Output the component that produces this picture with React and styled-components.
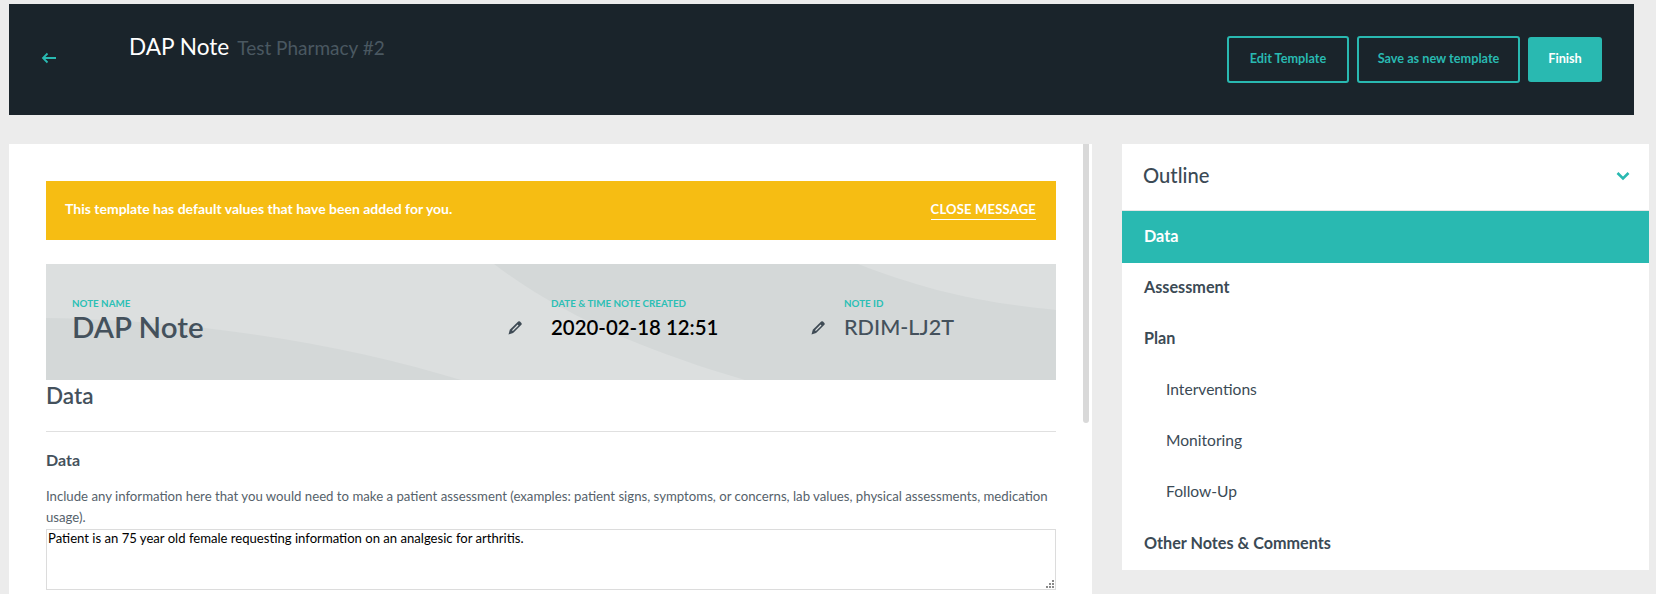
import React from 'react'
import styled, { createGlobalStyle } from 'styled-components'

const teal = '#29b9b1'
const slate = '#44515c'

const Global = createGlobalStyle`
  html, body {
    margin: 0;
    height: 100%;
    overflow: hidden;
    background: #ececec;
    font-family: Lato, "Open Sans", sans-serif;
  }
  * { box-sizing: border-box; }
`

const Page = styled.div`
  height: 594px;
  padding: 4px 7px 0 9px;
  overflow: hidden;
`

const Header = styled.header`
  width: 1625px;
  height: 111px;
  background: #1a242b;
  display: flex;
  padding: 0 32px 0 32px;
`

const BackLink = styled.a`
  width: 88px;
  color: ${teal};
  display: flex;
  align-items: center;
  padding-bottom: 3px;
`

const TitleWrap = styled.div`
  flex: 1;
  display: flex;
  align-items: baseline;
  gap: 8px;
  padding-top: 27px;
`

const Title = styled.h1`
  margin: 0;
  color: #fff;
  font-size: 22.6px;
  font-weight: 400;
  line-height: 32px;
`

const Subtitle = styled.span`
  color: #4a5861;
  font-size: 19px;
`

const Actions = styled.div`
  display: flex;
  align-items: center;
  gap: 8px;
`

const ActionButton = styled.button`
  height: ${props => props.$solid ? '45px' : '47px'};
  width: ${props => props.$w}px;
  border: ${props => props.$solid ? 'none' : `2px solid ${teal}`};
  border-radius: 3px;
  background: ${props => props.$solid ? teal : 'transparent'};
  color: ${props => props.$solid ? '#fff' : teal};
  font: 700 12.7px Lato, sans-serif;
  padding: 0 0 4px;
`

const Columns = styled.div`
  display: flex;
  gap: 30px;
  margin-top: 29px;
  align-items: flex-start;
`

const MainCard = styled.main`
  position: relative;
  width: 1083px;
  height: 450px;
  background: #fff;
  padding: 37px 36px 0 37px;
  overflow: hidden;
`

const ScrollThumb = styled.div`
  position: absolute;
  top: 0;
  right: 3px;
  width: 6px;
  height: 279px;
  border-radius: 0 0 3px 3px;
  background: #d9d9d9;
`

const Banner = styled.div`
  height: 59px;
  background: #f6bd13;
  color: #fff;
  display: flex;
  align-items: center;
  justify-content: space-between;
  padding: 0 20px 4px 19px;
  font-size: 14px;
  font-weight: 700;
`

const CloseLink = styled.a`
  margin-top: 4px;
  font-size: 13px;
  letter-spacing: 0.2px;
  padding-bottom: 2px;
  border-bottom: 1px solid #fff;
`

const NoteCard = styled.section`
  position: relative;
  margin-top: 24px;
  height: 116px;
  background: #dcdfdf;
  display: grid;
  grid-template-columns: 479px 293px 1fr;
  padding: 33px 0 0 26px;
  overflow: hidden;
`

const Swoosh = styled.svg`
  position: absolute;
  inset: 0;
  width: 100%;
  height: 100%;
`

const NoteField = styled.div`
  position: relative;
  display: flex;
  flex-direction: column;
`

const FieldLabel = styled.span`
  color: #2bbfb5;
  font-size: 9.8px;
  font-weight: 700;
  line-height: 12px;
`

const FieldValue = styled.span`
  color: ${props => props.$dark ? '#000' : slate};
  font-size: ${props => props.$size}px;
  font-weight: ${props => props.$weight};
  line-height: 34px;
  margin-top: 1px;
`

const EditIcon = styled.svg`
  position: absolute;
  right: ${props => props.$right}px;
  top: 23px;
  width: 16px;
  height: 16px;
  color: #3f4b55;
`

const SectionTitle = styled.h2`
  margin: 1px 0 0;
  color: ${slate};
  font-size: 22.5px;
  font-weight: 600;
  line-height: 30px;
`

const Rule = styled.hr`
  margin: 20px 0 0;
  border: none;
  border-top: 1px solid #e0e0e0;
`

const FieldTitle = styled.h3`
  margin: 17px 0 0;
  color: ${slate};
  font-size: 16px;
  font-weight: 700;
  line-height: 22px;
`

const HelpText = styled.p`
  margin: 15px 0 0;
  color: #56626b;
  font-size: 13.2px;
  line-height: 21px;
`

const InputWrap = styled.div`
  position: relative;
  margin-top: 1px;
`

const NoteInput = styled.textarea`
  display: block;
  width: 100%;
  height: 61px;
  padding: 1px 1px;
  border: 1px solid #dcdcdc;
  outline: none;
  resize: none;
  color: #000;
  font: 400 13.1px/15px Lato, sans-serif;
`

const Grip = styled.svg`
  position: absolute;
  right: 2px;
  bottom: 2px;
  width: 8px;
  height: 8px;
  color: #8a8a8a;
`

const Outline = styled.aside`
  width: 527px;
  height: 426px;
  background: #fff;
`

const OutlineHead = styled.div`
  height: 67px;
  display: flex;
  align-items: center;
  justify-content: space-between;
  padding: 0 19px 4px 21px;
  border-bottom: 1px solid #e6e6e6;
  color: #3b4a55;
  font-size: 20.2px;
  font-weight: 500;
  svg { color: ${teal}; margin-top: 2px; }
`

const OutlineItem = styled.a`
  display: flex;
  align-items: center;
  height: ${props => props.$active ? '52px' : '51.2px'};
  padding: 0 0 4px ${props => props.$sub ? '44px' : '22px'};
  background: ${props => props.$active ? teal : 'transparent'};
  color: ${props => props.$active ? '#fff' : '#3b4a55'};
  font-size: ${props => props.$sub ? '15.6px' : '16.2px'};
  font-weight: ${props => props.$sub ? 400 : 700};
`

const outline = [
  { label: 'Data', active: true },
  { label: 'Assessment' },
  { label: 'Plan' },
  { label: 'Interventions', sub: true },
  { label: 'Monitoring', sub: true },
  { label: 'Follow-Up', sub: true },
  { label: 'Other Notes & Comments' },
]

function Pencil({ right }) {
  return (
    <EditIcon $right={right} viewBox="0 0 16 16">
      <path fill="currentColor" d="M11.2 1.6a1.3 1.3 0 0 1 1.8 0l1.4 1.4a1.3 1.3 0 0 1 0 1.8l-8.3 8.3-4.6 1.3 1.3-4.6z" />
      <path fill="#dcdfdf" d="M10.6 4.6l.9.9-5.6 5.6-.9-.9z" />
    </EditIcon>
  )
}

export default function App() {
  return (
    <Page>
      <Global />
      <Header>
        <BackLink>
          <svg width="16" height="12" viewBox="0 0 16 12" fill="none" stroke="currentColor" strokeWidth="1.8">
            <path d="M15 6H2M6.5 1.5L2 6l4.5 4.5" />
          </svg>
        </BackLink>
        <TitleWrap>
          <Title>DAP Note</Title>
          <Subtitle>Test Pharmacy #2</Subtitle>
        </TitleWrap>
        <Actions>
          <ActionButton $w={122}>Edit Template</ActionButton>
          <ActionButton $w={163}>Save as new template</ActionButton>
          <ActionButton $w={74} $solid>Finish</ActionButton>
        </Actions>
      </Header>
      <Columns>
        <MainCard>
          <ScrollThumb />
          <Banner>
            <span>This template has default values that have been added for you.</span>
            <CloseLink>CLOSE MESSAGE</CloseLink>
          </Banner>
          <NoteCard>
            <Swoosh viewBox="0 0 1010 116" preserveAspectRatio="none">
              <path fill="#d4d8d8" d="M0 54C150 56 300 80 415 116H0Z" />
              <path fill="#d4d8d8" d="M448 0C520 55 610 90 699 116H1010V46C930 38 880 26 812 0Z" />
            </Swoosh>
            <NoteField>
              <FieldLabel>NOTE NAME</FieldLabel>
              <FieldValue $size={29.5} $weight={600}>DAP Note</FieldValue>
              <Pencil right={28} />
            </NoteField>
            <NoteField>
              <FieldLabel>DATE &amp; TIME NOTE CREATED</FieldLabel>
              <FieldValue $size={20.4} $weight={600} $dark>2020-02-18 12:51</FieldValue>
              <Pencil right={18} />
            </NoteField>
            <NoteField>
              <FieldLabel>NOTE ID</FieldLabel>
              <FieldValue $size={21.6} $weight={500}>RDIM-LJ2T</FieldValue>
            </NoteField>
          </NoteCard>
          <SectionTitle>Data</SectionTitle>
          <Rule />
          <FieldTitle>Data</FieldTitle>
          <HelpText>
            Include any information here that you would need to make a patient assessment (examples: patient signs, symptoms, or concerns, lab values, physical assessments, medication usage).
          </HelpText>
          <InputWrap>
            <NoteInput defaultValue="Patient is an 75 year old female requesting information on an analgesic for arthritis." />
            <Grip viewBox="0 0 8 8" fill="currentColor">
              <path d="M6 0h2v2H6zM3 3h2v2H3zM6 3h2v2H6zM0 6h2v2H0zM3 6h2v2H3zM6 6h2v2H6z" />
            </Grip>
          </InputWrap>
        </MainCard>
        <Outline>
          <OutlineHead>
            Outline
            <svg width="14" height="10" viewBox="0 0 14 10" fill="none" stroke="currentColor" strokeWidth="2.6">
              <path d="M1.5 2L7 7.5 12.5 2" />
            </svg>
          </OutlineHead>
          {outline.map(item => (
            <OutlineItem key={item.label} $active={item.active} $sub={item.sub}>{item.label}</OutlineItem>
          ))}
        </Outline>
      </Columns>
    </Page>
  )
}
